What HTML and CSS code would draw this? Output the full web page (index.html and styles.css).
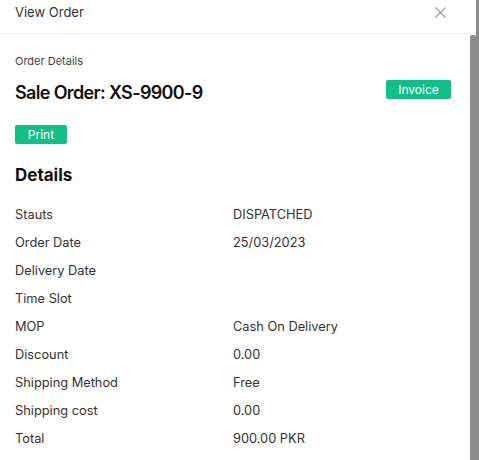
FILE: index.html
```html
<!DOCTYPE html>
<html>
<head>
<meta charset="utf-8">
<link rel="stylesheet" href="styles.css">
</head>
<body>
<div class="modal">
  <div class="modal-header">
    <span class="modal-title">View Order</span>
    <svg class="close" width="11" height="11" viewBox="0 0 11 11"><path d="M0.5 0.5L10.5 10.5M10.5 0.5L0.5 10.5" stroke="#9a9a9a" stroke-width="1.1" fill="none"/></svg>
  </div>
  <div class="modal-body">
    <div class="content">
      <div class="subtitle">Order Details</div>
      <div class="title-row">
        <h1 class="order-title">Sale Order: XS-9900-9</h1>
        <button class="btn btn-invoice">Invoice</button>
      </div>
      <button class="btn btn-print">Print</button>
      <h2 class="section-title">Details</h2>
      <div class="details">
        <div class="row"><span class="label">Stauts</span><span class="value">DISPATCHED</span></div>
        <div class="row"><span class="label">Order Date</span><span class="value">25/03/2023</span></div>
        <div class="row"><span class="label">Delivery Date</span><span class="value"></span></div>
        <div class="row"><span class="label">Time Slot</span><span class="value"></span></div>
        <div class="row"><span class="label">MOP</span><span class="value">Cash On Delivery</span></div>
        <div class="row"><span class="label">Discount</span><span class="value">0.00</span></div>
        <div class="row"><span class="label">Shipping Method</span><span class="value">Free</span></div>
        <div class="row"><span class="label">Shipping cost</span><span class="value">0.00</span></div>
        <div class="row"><span class="label">Total</span><span class="value">900.00 PKR</span></div>
      </div>
    </div>
    <div class="scrollbar"></div>
  </div>
</div>
</body>
</html>
```
FILE: styles.css
```css
html, body {
  margin: 0;
  padding: 0;
  height: 100%;
  overflow: hidden;
}
body {
  background: #8c8c8c;
  font-family: Inter, "Noto Sans", sans-serif;
  color: #222;
}
.modal {
  width: 476px;
  height: 460px;
  background: #fff;
  display: flex;
  flex-direction: column;
}
.modal-header {
  height: 34px;
  box-sizing: border-box;
  border-bottom: 1px solid #ececec;
  display: flex;
  align-items: flex-start;
  justify-content: space-between;
  padding: 4px 30px 0 15px;
  flex: none;
}
.modal-title {
  font-size: 13px;
  line-height: 16px;
  color: #333;
}
.close {
  margin-top: 3px;
}
.modal-body {
  flex: 1;
  display: flex;
  overflow: hidden;
}
.content {
  flex: 1;
  padding: 20px 19px 0 15px;
}
.scrollbar {
  width: 6px;
  flex: none;
  background: #8c8c8c;
  border-radius: 2px 2px 0 0;
  margin-top: 1px;
}
.subtitle {
  font-size: 11px;
  line-height: 14px;
  color: #444;
}
.title-row {
  display: flex;
  justify-content: space-between;
  align-items: flex-start;
  margin-top: 12px;
}
.order-title {
  margin: 0;
  font-size: 18px;
  line-height: 22px;
  font-weight: 600;
  letter-spacing: -0.65px;
  color: #111;
  margin-top: 2px;
}
.btn {
  border: none;
  background: #12bf87;
  color: #fff;
  font-family: Inter, "Noto Sans", sans-serif;
  font-size: 12px;
  line-height: 19px;
  height: 19px;
  padding: 0;
  border-radius: 2px;
}
.btn-invoice {
  width: 65px;
}
.btn-print {
  width: 52px;
  display: block;
  margin-top: 21px;
}
.section-title {
  margin: 20px 0 0;
  font-size: 17px;
  line-height: 22px;
  font-weight: 700;
  color: #111;
}
.details {
  margin-top: 21px;
}
.row {
  display: flex;
  height: 28px;
  font-size: 12.8px;
  line-height: 16px;
  color: #333;
}
.label {
  width: 218px;
}
```
